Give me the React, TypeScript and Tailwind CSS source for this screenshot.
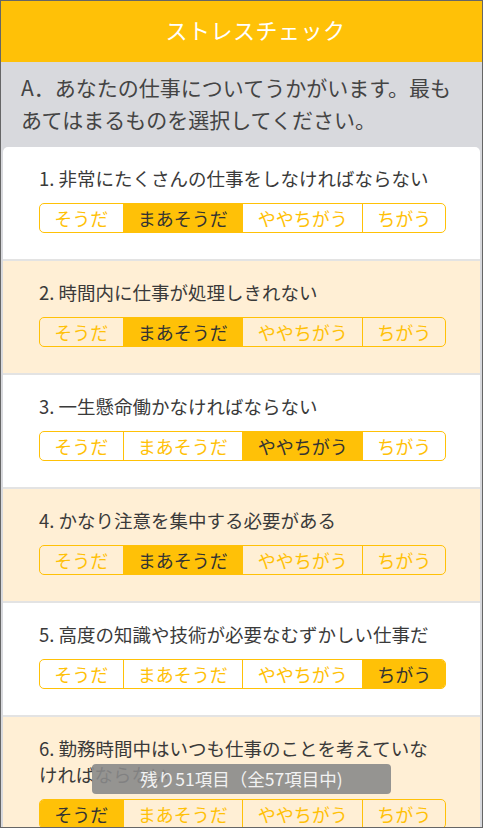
import { useState } from "react";

const OPTIONS = ["そうだ", "まあそうだ", "ややちがう", "ちがう"];
const WIDTHS = ["w-[83px]", "w-[120px]", "w-[121px]", "w-[83px]"];

const QUESTIONS = [
  { text: "非常にたくさんの仕事をしなければならない", answer: 1 },
  { text: "時間内に仕事が処理しきれない", answer: 1 },
  { text: "一生懸命働かなければならない", answer: 2 },
  { text: "かなり注意を集中する必要がある", answer: 1 },
  { text: "高度の知識や技術が必要なむずかしい仕事だ", answer: 3 },
  { text: "勤務時間中はいつも仕事のことを考えていなければならない", answer: 0 },
];

function Segment({ value, onChange }: { value: number; onChange: (v: number) => void }) {
  return (
    <div className="flex h-[30px] w-[407px] overflow-hidden rounded-[5px] border border-[#FFC107]">
      {OPTIONS.map((o, i) => (
        <button
          key={o}
          onClick={() => onChange(i)}
          className={`${WIDTHS[i]} flex items-center justify-center text-[18px] leading-none ${
            i > 0 ? "border-l border-[#FFC107]" : ""
          } ${value === i ? "bg-[#FFC107] text-[#333]" : "text-[#FFC107]"}`}
        >
          {o}
        </button>
      ))}
    </div>
  );
}

export default function App() {
  const [answers, setAnswers] = useState(QUESTIONS.map((q) => q.answer));

  return (
    <div
      className="relative h-[828px] w-[483px] overflow-hidden border border-[#666] bg-[#D8D9DD]"
      style={{ fontFamily: '"Noto Sans CJK JP", "Noto Sans", sans-serif' }}
    >
      <header className="flex h-[61px] items-center justify-center bg-[#FFC107] pl-[28px]">
        <h1 className="pb-[4px] text-[22px] tracking-[0.5px] text-white">ストレスチェック</h1>
      </header>

      <div className="pl-[20px] pr-[16px] pt-[9px] pb-[12px] text-[21px] leading-[32px] text-[#444]">
        A．あなたの仕事についてうかがいます。最もあてはまるものを選択してください。
      </div>

      <ul className="mx-[2px] overflow-hidden rounded-t-[5px]">
        {QUESTIONS.map((q, i) => (
          <li
            key={i}
            className={`h-[114px] border-b-2 border-[#E3E3E3] pl-[36px] pt-[18px] ${
              i % 2 === 0 ? "bg-white" : "bg-[#FFEFD5]"
            }`}
          >
            <p className="mb-[12px] w-[400px] text-[18.5px] leading-[26px] text-[#3a3a3a]">
              {i + 1}. {q.text}
            </p>
            <Segment
              value={answers[i]}
              onChange={(v) => setAnswers((prev) => prev.map((a, j) => (j === i ? v : a)))}
            />
          </li>
        ))}
      </ul>

      <div className="absolute left-[91px] top-[763px] flex h-[30px] w-[299px] items-center justify-center rounded-[4px] bg-[#8a8a8a]/90 text-[17.5px] text-[#f2f2f2]">
        残り51項目（全57項目中)
      </div>
    </div>
  );
}
